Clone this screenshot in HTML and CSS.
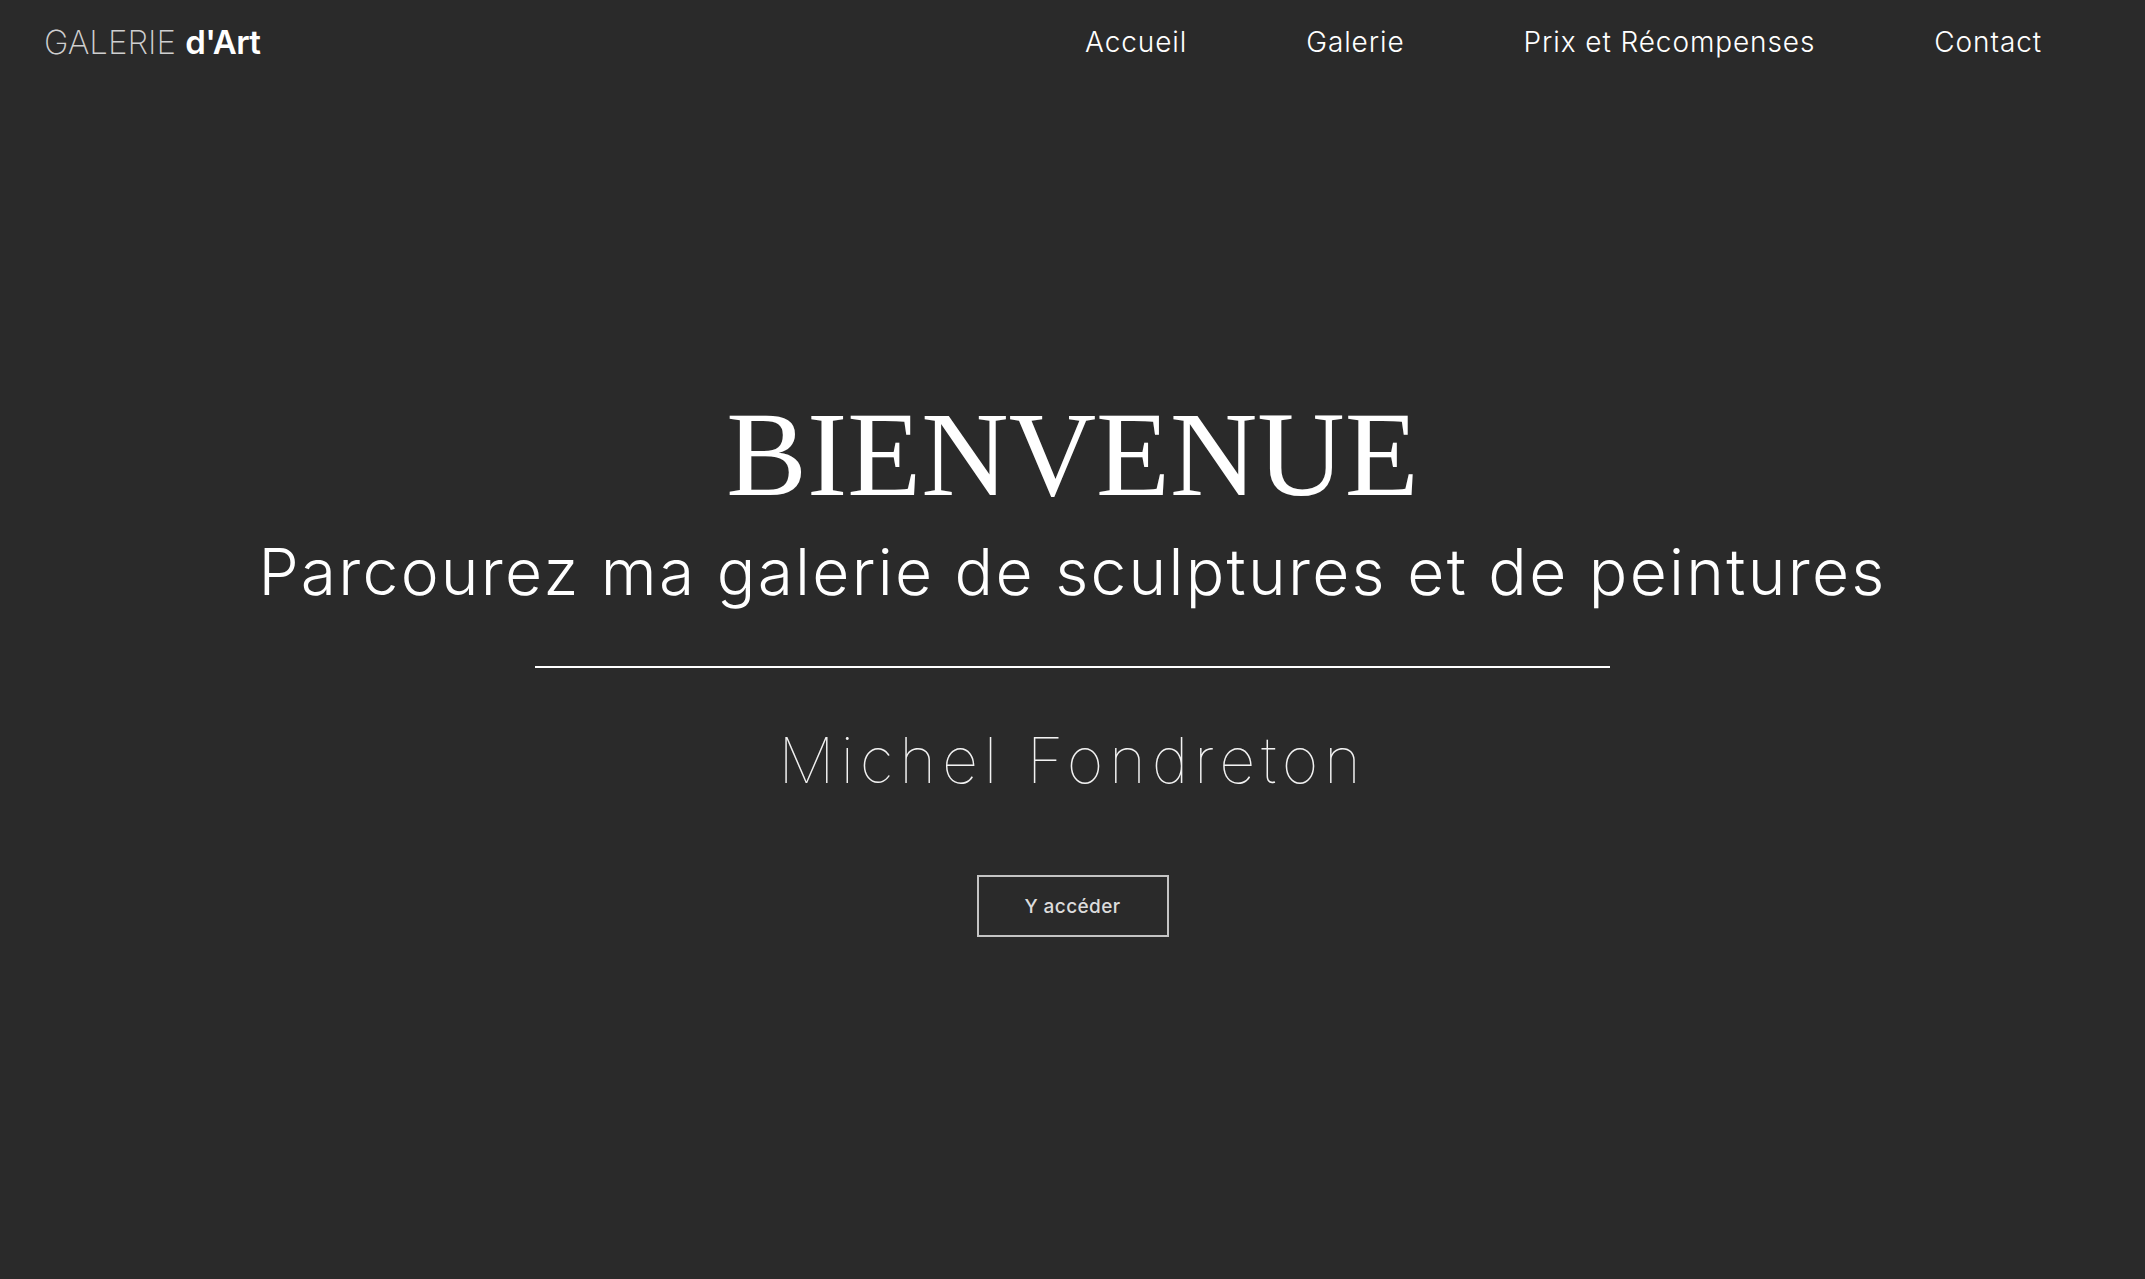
FILE: index.html
```html
<!DOCTYPE html>
<html lang="fr">
<head>
<meta charset="utf-8">
<title>Galerie d'Art — Michel Fondreton</title>
<link rel="stylesheet" href="styles.css">
</head>
<body>
<header class="site-header">
  <a class="logo" href="#"><span class="logo-light">GALERIE</span> <span class="logo-bold">d'Art</span></a>
  <nav class="main-nav">
    <a href="#">Accueil</a>
    <a href="#">Galerie</a>
    <a href="#">Prix et Récompenses</a>
    <a href="#">Contact</a>
  </nav>
</header>
<main class="hero">
  <h1 class="hero-title">BIENVENUE</h1>
  <p class="hero-subtitle">Parcourez ma galerie de sculptures et de peintures</p>
  <hr class="hero-rule">
  <p class="hero-name">Michel Fondreton</p>
  <a class="hero-button" href="#">Y accéder</a>
</main>
</body>
</html>
```
FILE: styles.css
```css
html, body {
  margin: 0;
  padding: 0;
}
body {
  background: #2a2a2a;
  color: #ffffff;
  font-family: "Inter", "Liberation Sans", sans-serif;
  min-height: 1279px;
}
a {
  color: inherit;
  text-decoration: none;
}
.site-header {
  height: 84px;
  display: flex;
  align-items: center;
  justify-content: space-between;
  padding: 0 103px 0 44px;
}
.logo {
  font-size: 33px;
  line-height: 1;
  white-space: nowrap;
}
.logo-light {
  font-weight: 200;
  color: #cfcfcf;
  letter-spacing: 0;
}
.logo-bold {
  font-weight: 600;
  color: #ffffff;
  letter-spacing: -0.6px;
}
.main-nav {
  display: flex;
  gap: 119px;
}
.main-nav a {
  font-size: 28px;
  line-height: 1;
  font-weight: 300;
  letter-spacing: 0.9px;
  color: #ffffff;
}
.hero {
  display: flex;
  flex-direction: column;
  align-items: center;
  padding-top: 310px;
}
.hero-title {
  margin: 0;
  font-family: "Liberation Serif", "Times New Roman", serif;
  font-weight: 400;
  font-size: 121px;
  line-height: 1;
  letter-spacing: 0;
  color: #ffffff;
}
.hero-subtitle {
  margin: 25px 0 0;
  font-size: 64px;
  line-height: 1;
  font-weight: 300;
  letter-spacing: 2.3px;
  color: #ffffff;
}
.hero-rule {
  margin: 62px 0 0;
  width: 1075px;
  height: 2px;
  border: 0;
  background: #ffffff;
}
.hero-name {
  margin: 61px 0 0;
  font-size: 63px;
  line-height: 1;
  font-weight: 100;
  letter-spacing: 5.8px;
  color: #f2f2f2;
}
.hero-button {
  margin-top: 83px;
  box-sizing: border-box;
  width: 192px;
  height: 62px;
  display: flex;
  align-items: center;
  justify-content: center;
  border: 2px solid #c4c4c4;
  font-size: 19px;
  font-weight: 500;
  letter-spacing: 0.4px;
  color: #dcdcdc;
}
```
